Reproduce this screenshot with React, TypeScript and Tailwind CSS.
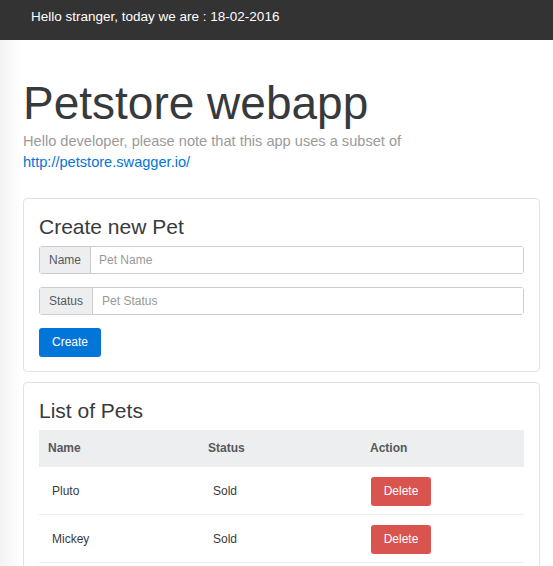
import React from "react";

const pets = [
  { name: "Pluto", status: "Sold" },
  { name: "Mickey", status: "Sold" },
];

export default function App() {
  return (
    <div className="min-h-[566px] bg-white font-['Liberation_Sans',Arial,sans-serif] text-[#373a3c]">
      <div className="h-[40px] bg-[#333333] pl-[31px] pt-[4px]">
        <span className="text-[13.5px] leading-[20px] text-white">
          Hello stranger, today we are : 18-02-2016
        </span>
      </div>
      <div className="bg-[linear-gradient(to_right,#f3f3f3,#ffffff_22px)] pl-[23px] pr-[13px] pt-[38px]">
        <h1 className="text-[46px] font-light leading-[1.1] text-[#373a3c]">Petstore webapp</h1>
        <p className="mt-[2px] text-[14.6px] leading-[21px] text-[#9a9a9a]">
          Hello developer, please note that this app uses a subset of
          <br />
          <a className="text-[#0275d8]" href="#">
            http://petstore.swagger.io/
          </a>
        </p>

        <div className="mt-[25px] rounded-[4px] border border-[#e3e3e3] px-[15px] pb-[14px] pt-[16px]">
          <h2 className="mb-[8px] text-[21px] leading-[1.1] text-[#373a3c]">Create new Pet</h2>
          <div className="flex flex-col gap-[13px]">
            <div className="flex h-[28px] rounded-[3px] border border-[#cccccc]">
              <span className="flex items-center border-r border-[#cccccc] bg-[#eceeef] px-[9px] text-[12px] text-[#55595c]">
                Name
              </span>
              <input
                className="flex-1 bg-white px-[8px] text-[12px] text-[#55595c] outline-none placeholder:text-[#999999]"
                placeholder="Pet Name"
              />
            </div>
            <div className="flex h-[28px] rounded-[3px] border border-[#cccccc]">
              <span className="flex items-center border-r border-[#cccccc] bg-[#eceeef] px-[9px] text-[12px] text-[#55595c]">
                Status
              </span>
              <input
                className="flex-1 bg-white px-[9px] text-[12px] text-[#55595c] outline-none placeholder:text-[#999999]"
                placeholder="Pet Status"
              />
            </div>
            <div>
              <button className="h-[29px] w-[62px] rounded-[3px] bg-[#0275d8] text-[12px] text-white">
                Create
              </button>
            </div>
          </div>
        </div>

        <div className="mt-[10px] rounded-[4px] border border-[#e3e3e3] px-[15px] pb-[15px] pt-[16px]">
          <h2 className="mb-[8px] text-[21px] leading-[1.1] text-[#373a3c]">List of Pets</h2>
          <div className="grid h-[37px] grid-cols-[160px_162px_1fr] items-center bg-[#eceeef] text-[12px] font-bold text-[#55595c]">
            <div className="pl-[9px]">Name</div>
            <div className="pl-[9px]">Status</div>
            <div className="pl-[9px]">Action</div>
          </div>
          {pets.map((p) => (
            <div
              key={p.name}
              className="grid grid-cols-[160px_162px_1fr] items-center border-b border-[#eceeef] pb-[8px] pt-[10px] text-[12px] text-[#373a3c]"
            >
              <div className="pl-[13px]">{p.name}</div>
              <div className="pl-[14px]">{p.status}</div>
              <div className="pl-[10px]">
                <button className="h-[29px] w-[60px] rounded-[3px] bg-[#d9534f] text-[12px] text-white">
                  Delete
                </button>
              </div>
            </div>
          ))}
        </div>
      </div>
    </div>
  );
}
